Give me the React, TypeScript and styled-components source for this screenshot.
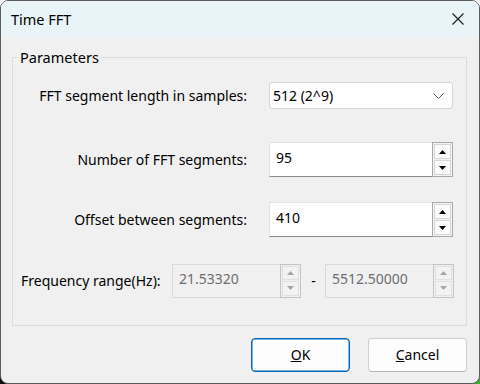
import React from 'react';
import styled, { createGlobalStyle } from 'styled-components';

const GlobalStyle = createGlobalStyle`
  html, body {
    margin: 0;
    padding: 0;
  }
  body {
    width: 480px;
    height: 384px;
    overflow: hidden;
    background: linear-gradient(#ffffff 0 50%, transparent 50%),
      linear-gradient(to right, #0d0d0d, #1f3b4a 60%, #35b030);
    font-family: "Noto Sans", "Open Sans", sans-serif;
    font-size: 14px;
    color: #000;
  }
`;

const Window = styled.div`
  box-sizing: border-box;
  width: 480px;
  height: 384px;
  display: flex;
  flex-direction: column;
  border: 1px solid #5c5c5c;
  border-radius: 8px;
  overflow: hidden;
  background: #f0f0f0;
`;

const TitleBar = styled.div`
  height: 36px;
  flex: none;
  display: flex;
  align-items: center;
  justify-content: space-between;
  padding: 0 14px 0 10px;
  background: #e8f4f8;
`;

const Title = styled.span`
  font-size: 14.5px;
  padding-bottom: 1px;
`;

const CloseButton = styled.button`
  width: 14px;
  height: 14px;
  padding: 0;
  border: 0;
  background: none;
  display: flex;
  align-items: center;
  justify-content: center;
`;

const Body = styled.div`
  flex: 1;
  display: flex;
  flex-direction: column;
  padding: 10px 12px 0 11px;
`;

const GroupBox = styled.fieldset`
  margin: 0;
  padding: 15px 12px 28px 0;
  border: 1px solid #dcdcdc;
  min-width: 0;
`;

const Legend = styled.legend`
  padding: 0 2px;
  margin-left: 5px;
  line-height: 20px;
  font-size: 14.5px;
`;

const FormGrid = styled.div`
  display: grid;
  grid-template-columns: 234px 184px;
  column-gap: 22px;
  align-items: center;
`;

const Label = styled.label`
  text-align: right;
  white-space: nowrap;
`;

const RangeRow = styled.div`
  display: flex;
  align-items: center;
  height: 33px;
  margin-top: 27px;
  padding-left: 8px;
`;

const RangeLabel = styled.span`
  width: 151px;
  white-space: nowrap;
`;

const Dash = styled.span`
  width: 23px;
  text-align: center;
  padding-left: 1px;
`;

const Select = styled.div`
  box-sizing: border-box;
  height: 27px;
  display: flex;
  align-items: center;
  justify-content: space-between;
  padding: 0 8px 0 3px;
  background: #fff;
  border: 1px solid #d4d4d4;
  border-radius: 3px;
`;

const SpinBox = styled.div<{ $height: number; $width: number; $disabled?: boolean }>`
  box-sizing: border-box;
  width: ${p => p.$width}px;
  height: ${p => p.$height}px;
  display: flex;
  background: ${p => (p.$disabled ? '#f0f0f0' : '#fff')};
  border: 1px solid ${p => (p.$disabled ? '#dadada' : '#e2e2e2')};
  border-bottom-color: ${p => (p.$disabled ? '#dadada' : '#8a8a8a')};
  color: ${p => (p.$disabled ? '#6d6d6d' : '#000')};
`;

const SpinText = styled.div<{ $top: number }>`
  flex: 1;
  padding: ${p => p.$top}px 0 0 6px;
  line-height: 18px;
`;

const Spinner = styled.div<{ $disabled?: boolean }>`
  box-sizing: border-box;
  width: 21px;
  margin: -1px -1px -1px 0;
  display: flex;
  flex-direction: column;
  border: 1px solid ${p => (p.$disabled ? '#c4c4c4' : '#a8a8a8')};
  background: ${p => (p.$disabled ? '#f0f0f0' : '#f4f4f4')};
  padding: 1px;
  gap: 1px;
`;

const SpinButton = styled.div<{ $disabled?: boolean }>`
  flex: 1;
  display: flex;
  align-items: center;
  justify-content: center;
  border: 1px solid ${p => (p.$disabled ? '#e0e0e0' : '#d6d6d6')};
  background: ${p => (p.$disabled ? '#f2f2f2' : '#fbfbfb')};
`;

const ButtonRow = styled.div`
  display: flex;
  justify-content: flex-end;
  gap: 18px;
  margin-top: 12px;
`;

const DialogButton = styled.button<{ $primary?: boolean }>`
  box-sizing: border-box;
  width: 99px;
  height: 34px;
  font: inherit;
  color: #000;
  background: #fdfdfd;
  border: 1px solid ${p => (p.$primary ? '#0067c0' : '#d0d0d0')};
  border-bottom-color: ${p => (p.$primary ? '#0067c0' : '#b4b4b4')};
  border-radius: 4px;
  padding: 0 0 1px;
  ${p => p.$primary && 'box-shadow: inset 0 0 0 0.5px #0067c0;'}
`;

const Arrow: React.FC<{ down?: boolean; color: string }> = ({ down, color }) => (
  <svg width="7" height="4" viewBox="0 0 7 4">
    <polygon points={down ? '0,0 7,0 3.5,4' : '0,4 7,4 3.5,0'} fill={color} />
  </svg>
);

const NumberInput: React.FC<{
  value: string;
  width: number;
  height: number;
  top: number;
  disabled?: boolean;
}> = ({ value, width, height, top, disabled }) => {
  const arrow = disabled ? '#a6a6a6' : '#000';
  return (
    <SpinBox $width={width} $height={height} $disabled={disabled}>
      <SpinText $top={top}>{value}</SpinText>
      <Spinner $disabled={disabled}>
        <SpinButton $disabled={disabled}>
          <Arrow color={arrow} />
        </SpinButton>
        <SpinButton $disabled={disabled}>
          <Arrow down color={arrow} />
        </SpinButton>
      </Spinner>
    </SpinBox>
  );
};

const App: React.FC = () => (
  <>
    <GlobalStyle />
    <Window>
      <TitleBar>
        <Title>Time FFT</Title>
        <CloseButton aria-label="Close">
          <svg width="12" height="12" viewBox="0 0 12 12">
            <path d="M0.5 0.5 L11.5 11.5 M11.5 0.5 L0.5 11.5" stroke="#1a1a1a" strokeWidth="1.1" />
          </svg>
        </CloseButton>
      </TitleBar>
      <Body>
        <GroupBox>
          <Legend>Parameters</Legend>
          <FormGrid>
            <Label>FFT segment length in samples:</Label>
            <Select>
              <span>512 (2^9)</span>
              <svg width="11" height="6" viewBox="0 0 11 6">
                <path d="M0.5 0.5 L5.5 5.5 L10.5 0.5" fill="none" stroke="#5a5a5a" strokeWidth="1" />
              </svg>
            </Select>
          </FormGrid>
          <FormGrid style={{ marginTop: 33 }}>
            <Label>Number of FFT segments:</Label>
            <NumberInput value="95" width={184} height={35} top={6} />
          </FormGrid>
          <FormGrid style={{ marginTop: 25 }}>
            <Label>Offset between segments:</Label>
            <NumberInput value="410" width={184} height={35} top={6} />
          </FormGrid>
          <RangeRow>
            <RangeLabel>Frequency range(Hz):</RangeLabel>
            <NumberInput value="21.53320" width={129} height={34} top={5} disabled />
            <Dash>-</Dash>
            <NumberInput value="5512.50000" width={129} height={34} top={5} disabled />
          </RangeRow>
        </GroupBox>
        <ButtonRow>
          <DialogButton $primary>
            <u>O</u>K
          </DialogButton>
          <DialogButton>
            <u>C</u>ancel
          </DialogButton>
        </ButtonRow>
      </Body>
    </Window>
  </>
);

export default App;
